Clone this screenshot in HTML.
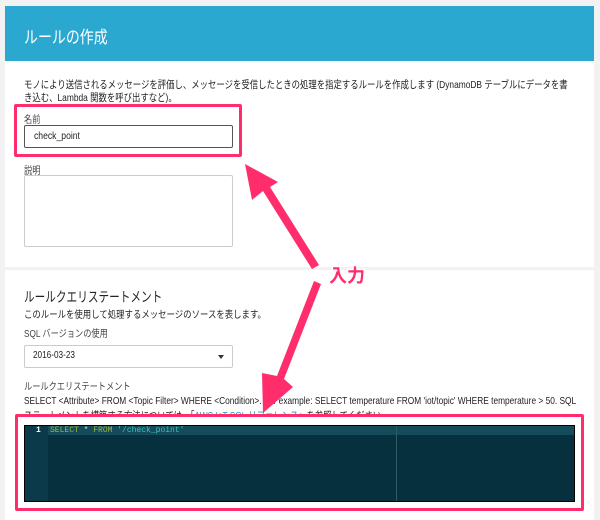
<!DOCTYPE html>
<html><head><meta charset="utf-8"><style>
body{margin:0;width:600px;height:520px;background:#f2f2f2;font-family:"Liberation Sans","Noto Sans CJK JP",sans-serif;position:relative;overflow:hidden;color:#222}
.a{position:absolute}
.t{font-size:11px;white-space:nowrap;transform-origin:0 0;transform:scaleX(0.82)}
</style></head><body>
<div class="a" style="left:5px;top:6px;width:589px;height:55px;background:#2aa8d0"></div>
<div class="a t" style="left:24px;top:23px;color:#fff;font-size:17px">ルールの作成</div>
<div class="a" style="left:5px;top:61px;width:589px;height:206px;background:#fff"></div>
<div class="a" style="left:5px;top:270px;width:589px;height:250px;background:#fff"></div>
<div class="a t" style="left:24px;top:79px;font-size:10.5px;line-height:13px;transform:scaleX(0.798)">モノにより送信されるメッセージを評価し、メッセージを受信したときの処理を指定するルールを作成します (DynamoDB テーブルにデータを書<br>き込む、Lambda 関数を呼び出すなど)。</div>
<div class="a" style="left:14px;top:104px;width:222px;height:47px;border:3px solid #ff2d6b;border-radius:2px"></div>
<div class="a t" style="left:24px;top:111px;font-size:10px;color:#444">名前</div>
<div class="a" style="left:24px;top:125px;width:207px;height:21px;border:1px solid #555;border-radius:2px"></div>
<div class="a t" style="left:34px;top:130px;font-size:10.5px">check_point</div>
<div class="a t" style="left:24px;top:162px;font-size:10px;color:#444">説明</div>
<div class="a" style="left:24px;top:175px;width:207px;height:70px;border:1px solid #ccc;border-radius:2px"></div>
<div class="a t" style="left:24px;top:287px;font-size:14px;transform:scaleX(0.76)">ルールクエリステートメント</div>
<div class="a t" style="left:24px;top:306px;font-size:10px;transform:scaleX(0.84)">このルールを使用して処理するメッセージのソースを表します。</div>
<div class="a t" style="left:24px;top:325px;font-size:10px;color:#444">SQL バージョンの使用</div>
<div class="a" style="left:24px;top:345px;width:207px;height:21px;border:1px solid #ccc;border-radius:2px"></div>
<div class="a t" style="left:33px;top:350px;font-size:10px">2016-03-23</div>
<div class="a" style="left:218px;top:355px;border:3px solid transparent;border-top:4px solid #333"></div>
<div class="a t" style="left:24px;top:378px;font-size:10px;color:#444">ルールクエリステートメント</div>
<div class="a t" style="left:24px;top:394px;font-size:10.5px;line-height:15px;transform:scaleX(0.794)">SELECT &lt;Attribute&gt; FROM &lt;Topic Filter&gt; WHERE &lt;Condition&gt;. For example: SELECT temperature FROM 'iot/topic' WHERE temperature &gt; 50. SQL<br>ステートメントを構築する方法については、「<span style="color:#0aa0d0">AWS IoT SQL リファレンス</span>」を参照してください。</div>
<div class="a" style="left:15px;top:414px;width:569px;height:97px;background:#fff;border-radius:2px;box-sizing:border-box;border:3px solid #ff2d6b"></div>
<div class="a" style="left:24px;top:425px;width:551px;height:77px;background:#07303f;border:1px solid #000;box-sizing:border-box"></div>
<div class="a" style="left:25px;top:426px;width:23px;height:75px;background:#0b3a4a"></div>
<div class="a" style="left:48px;top:426px;width:526px;height:9px;background:#154c5a"></div>
<div class="a" style="left:396px;top:426px;width:1px;height:75px;background:#2f5a66"></div>
<div class="a" style="left:36px;top:426px;font:bold 8px 'Liberation Mono',monospace;color:#fff">1</div>
<div class="a" style="left:50px;top:426px;font:8px 'Liberation Mono',monospace;color:#9fb83a;white-space:pre">SELECT <span style="color:#ddd">*</span> FROM <span style="color:#3cc2c2">'/check_point'</span></div>
<svg class="a" style="left:0;top:0" width="600" height="520">
<polygon points="245,164 278,182 270,187 319,265 312,269 263,191 252,200" fill="#ff2d6b"/>
<polygon points="314,281 321,284 284,379 293,387 263,413 262,373 277,376" fill="#ff2d6b"/>
<text x="329" y="282" font-size="18" font-weight="bold" fill="#ff2d6b" stroke="#fff" stroke-width="3" paint-order="stroke" font-family="Noto Sans CJK JP,sans-serif">入力</text>
</svg>
</body></html>
